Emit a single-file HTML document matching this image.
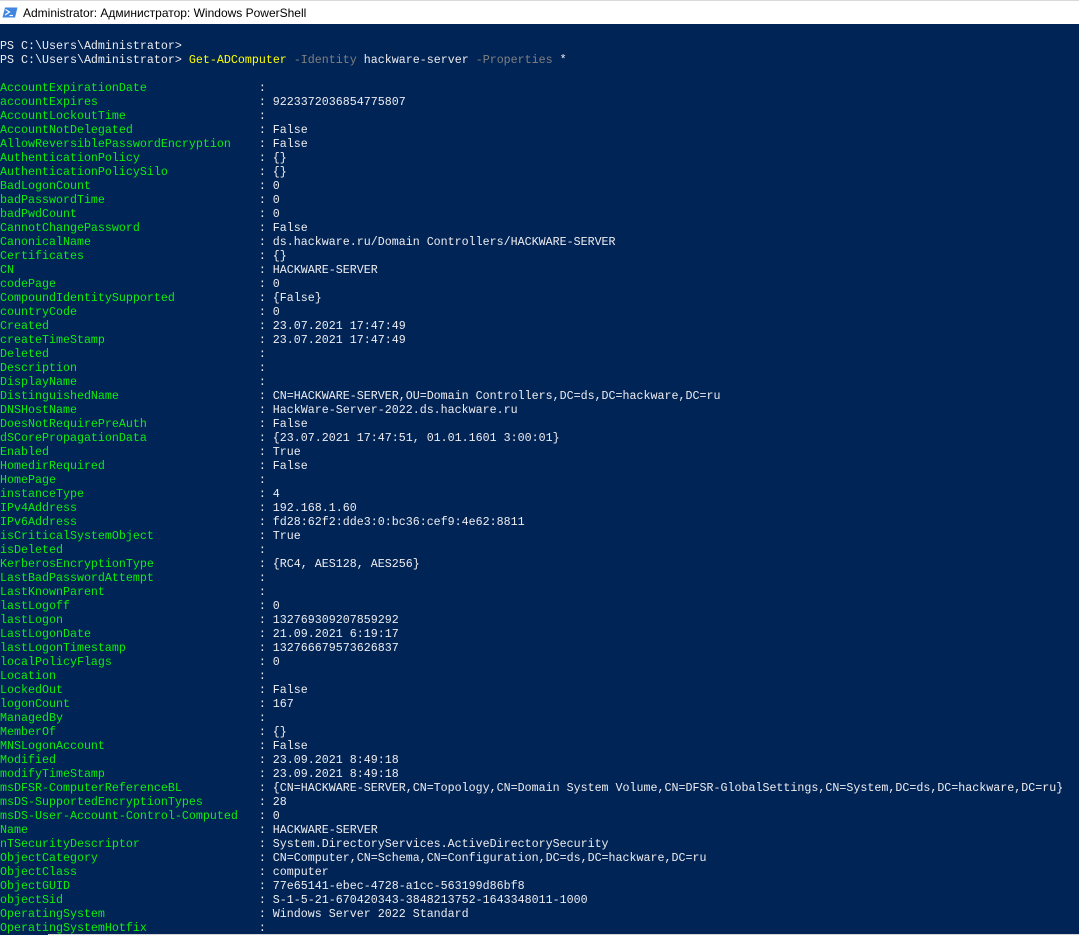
<!DOCTYPE html>
<html lang="en">
<head>
<meta charset="utf-8">
<title>Administrator: Администратор: Windows PowerShell</title>
<style>
html,body{margin:0;padding:0;width:1079px;height:935px;overflow:hidden;background:#012456}
#bar{position:absolute;left:0;top:0;width:1079px;height:24px;background:#fff;border-top:1px solid #d9d9d9;box-sizing:border-box}
#title{position:absolute;left:23px;top:6px;font:12px/14px "Liberation Sans","Noto Sans CJK SC",sans-serif;color:#000;white-space:nowrap}
#ico{position:absolute;left:2px;top:7px}
pre{position:absolute;left:0;top:39px;margin:0;font-family:"Liberation Mono",monospace;font-size:11.667px;line-height:14px;color:#eeedf0;white-space:pre}
.g{color:#0dec0d}.y{color:#ffff00}.m{color:#808080}
#bot{position:absolute;left:48px;top:934px;width:1031px;height:1px;background:#d4d4d4}
</style>
</head>
<body>
<div id="bar"></div>
<svg id="ico" width="16" height="11" viewBox="0 0 16 11"><path d="M3 0.5H15.5L13 10.5H0.5Z" fill="#3f86e0"/><path d="M3.5 2.5L7.5 5L3 8" fill="none" stroke="#fff" stroke-width="1.2"/><path d="M7.5 8.5H11" stroke="#fff" stroke-width="1.2"/></svg>
<div id="title">Administrator: Администратор: Windows PowerShell</div>
<pre>PS C:\Users\Administrator&gt;
PS C:\Users\Administrator&gt; <span class="y">Get-ADComputer</span> <span class="m">-Identity</span> hackware-server <span class="m">-Properties</span> *

<span class="g">AccountExpirationDate                </span>:
<span class="g">accountExpires                       </span>: 9223372036854775807
<span class="g">AccountLockoutTime                   </span>:
<span class="g">AccountNotDelegated                  </span>: False
<span class="g">AllowReversiblePasswordEncryption    </span>: False
<span class="g">AuthenticationPolicy                 </span>: {}
<span class="g">AuthenticationPolicySilo             </span>: {}
<span class="g">BadLogonCount                        </span>: 0
<span class="g">badPasswordTime                      </span>: 0
<span class="g">badPwdCount                          </span>: 0
<span class="g">CannotChangePassword                 </span>: False
<span class="g">CanonicalName                        </span>: ds.hackware.ru/Domain Controllers/HACKWARE-SERVER
<span class="g">Certificates                         </span>: {}
<span class="g">CN                                   </span>: HACKWARE-SERVER
<span class="g">codePage                             </span>: 0
<span class="g">CompoundIdentitySupported            </span>: {False}
<span class="g">countryCode                          </span>: 0
<span class="g">Created                              </span>: 23.07.2021 17:47:49
<span class="g">createTimeStamp                      </span>: 23.07.2021 17:47:49
<span class="g">Deleted                              </span>:
<span class="g">Description                          </span>:
<span class="g">DisplayName                          </span>:
<span class="g">DistinguishedName                    </span>: CN=HACKWARE-SERVER,OU=Domain Controllers,DC=ds,DC=hackware,DC=ru
<span class="g">DNSHostName                          </span>: HackWare-Server-2022.ds.hackware.ru
<span class="g">DoesNotRequirePreAuth                </span>: False
<span class="g">dSCorePropagationData                </span>: {23.07.2021 17:47:51, 01.01.1601 3:00:01}
<span class="g">Enabled                              </span>: True
<span class="g">HomedirRequired                      </span>: False
<span class="g">HomePage                             </span>:
<span class="g">instanceType                         </span>: 4
<span class="g">IPv4Address                          </span>: 192.168.1.60
<span class="g">IPv6Address                          </span>: fd28:62f2:dde3:0:bc36:cef9:4e62:8811
<span class="g">isCriticalSystemObject               </span>: True
<span class="g">isDeleted                            </span>:
<span class="g">KerberosEncryptionType               </span>: {RC4, AES128, AES256}
<span class="g">LastBadPasswordAttempt               </span>:
<span class="g">LastKnownParent                      </span>:
<span class="g">lastLogoff                           </span>: 0
<span class="g">lastLogon                            </span>: 132769309207859292
<span class="g">LastLogonDate                        </span>: 21.09.2021 6:19:17
<span class="g">lastLogonTimestamp                   </span>: 132766679573626837
<span class="g">localPolicyFlags                     </span>: 0
<span class="g">Location                             </span>:
<span class="g">LockedOut                            </span>: False
<span class="g">logonCount                           </span>: 167
<span class="g">ManagedBy                            </span>:
<span class="g">MemberOf                             </span>: {}
<span class="g">MNSLogonAccount                      </span>: False
<span class="g">Modified                             </span>: 23.09.2021 8:49:18
<span class="g">modifyTimeStamp                      </span>: 23.09.2021 8:49:18
<span class="g">msDFSR-ComputerReferenceBL           </span>: {CN=HACKWARE-SERVER,CN=Topology,CN=Domain System Volume,CN=DFSR-GlobalSettings,CN=System,DC=ds,DC=hackware,DC=ru}
<span class="g">msDS-SupportedEncryptionTypes        </span>: 28
<span class="g">msDS-User-Account-Control-Computed   </span>: 0
<span class="g">Name                                 </span>: HACKWARE-SERVER
<span class="g">nTSecurityDescriptor                 </span>: System.DirectoryServices.ActiveDirectorySecurity
<span class="g">ObjectCategory                       </span>: CN=Computer,CN=Schema,CN=Configuration,DC=ds,DC=hackware,DC=ru
<span class="g">ObjectClass                          </span>: computer
<span class="g">ObjectGUID                           </span>: 77e65141-ebec-4728-a1cc-563199d86bf8
<span class="g">objectSid                            </span>: S-1-5-21-670420343-3848213752-1643348011-1000
<span class="g">OperatingSystem                      </span>: Windows Server 2022 Standard
<span class="g">OperatingSystemHotfix                </span>:</pre>
<div id="bot"></div>
</body>
</html>
